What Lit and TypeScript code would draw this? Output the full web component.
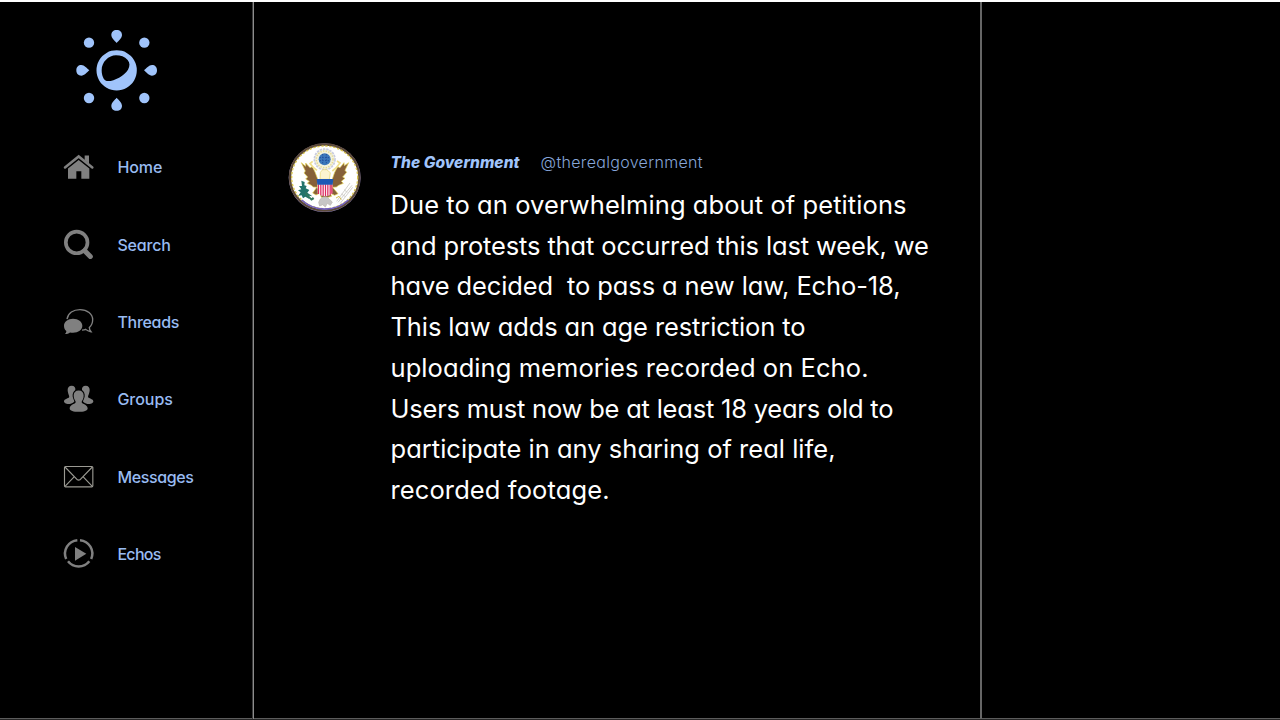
import { LitElement, html, svg, css } from "lit";
import { customElement, property } from "lit/decorators.js";

/** A single line of text whose tracking is adjusted to a given measure. */
@customElement("fit-line")
class FitLine extends LitElement {
  @property() text = "";
  @property({ type: Number }) measure = 100;

  static styles = css`
    :host { display: block; white-space: pre; }
    .run { display: inline-block; }
  `;

  firstUpdated() {
    const run = this.renderRoot.querySelector(".run") as HTMLElement;
    const natural = run.getBoundingClientRect().width;
    run.style.letterSpacing = `${(this.measure - natural) / (this.text.length - 1)}px`;
  }

  render() {
    return html`<span class="run">${this.text}</span>`;
  }
}

const G = "#808080";

const items = [
  {
    label: "Home", measure: 45, box: "30 27.6 108 108",
    art: svg`<path d="M45 83 L86 50 L127 83" fill="none" stroke=${G} stroke-width="7.5" stroke-linecap="round" stroke-linejoin="miter"/>
      <path d="M104 47 H117 V72 L104 61 Z" fill=${G}/>
      <path d="M54 86 L86 60.5 L118 86 V117 H94 V94 H79 V117 H54 Z" fill=${G}/>`,
  },
  {
    label: "Search", measure: 53.5, box: "30 259.7 108 108",
    art: svg`<circle cx="80" cy="306" r="32.5" fill="none" stroke=${G} stroke-width="11"/>
      <path d="M104 331 L121 348" stroke=${G} stroke-width="15" stroke-linecap="round"/>`,
  },
  {
    label: "Threads", measure: 62, box: "30 26.8 108 108",
    art: svg`<path d="M51 72 C54 54 70 43.500 90 43.500 C112 43.500 128 57 128 74 C128 84 124 92 118 97 C118 102 120 106 123 110 C116 109 111 107 107 103 C103 105 99 105 96 105" fill="none" stroke=${G} stroke-width="4"/>
      <path d="M69 71 C85 71 97 80 97 92 C97 104 85 113 69 113 C66 113 63 113 60 112 C56 115 51 117 45 117 C48 114 49 111 49 108 C44 104 42 98 42 92 C42 80 54 71 69 71 Z" fill=${G}/>`,
  },
  {
    label: "Groups", measure: 55.5, box: "30 258.8 108 108",
    art: svg`<g fill=${G}>
      <path d="M65 273 C73 273 77 278 76 286 C70 290 67 297 68 305 C69 312 73 317 73 320 C71 324 65 325 60 328 C50 328 42 325 42 320 C42 313 51 312 57 308 C60 305 53 297 53 286 C53 278 57 273 65 273 Z"/>
      <path d="M107 273 C99 273 95 278 96 286 C102 290 105 297 104 305 C103 312 99 317 99 320 C101 324 107 325 112 328 C122 328 130 325 130 320 C130 313 121 312 115 308 C112 305 119 297 119 286 C119 278 115 273 107 273 Z"/>
      <path d="M86 287 C96 287 101 293 101 302 C101 312 97 316 95 321 C93 328 113 328 113 341 C113 348 101 351 86 351 C71 351 59 348 59 341 C59 328 79 328 77 321 C75 316 71 312 71 302 C71 293 76 287 86 287 Z"/></g>`,
  },
  {
    label: "Messages", measure: 76.5, box: "30 26 108 108",
    art: svg`<g fill="none" stroke="#9a9992" stroke-width="3.4"><rect x="43.500" y="48.500" width="85" height="61" rx="3"/>
      <path d="M45 50 L78 84 C83 91 89 91 94 84 L127 50 M45 108 L73 79 M127 108 L99 79"/></g>`,
  },
  {
    label: "Echos", measure: 44, box: "30 258 108 108",
    art: svg`<g fill="none" stroke=${G} stroke-width="7.500">
      <path d="M82 270.500 A40.500 40.500 0 0 0 48.500 327"/>
      <path d="M90 270.500 A40.500 40.500 0 0 1 123.500 327"/>
      <path d="M54 334 A40.500 40.500 0 0 0 118 334"/></g>
      <path d="M75 291 L109 311 L75 332 Z" fill=${G}/>`,
  },
];

const lines: [string, number][] = [
  ["Due to an overwhelming about of petitions", 516],
  ["and protests that occurred this last week, we", 538.5],
  ["have decided  to pass a new law, Echo-18,", 510],
  ["This law adds an age restriction to", 415],
  ["uploading memories recorded on Echo.", 478],
  ["Users must now be at least 18 years old to", 503],
  ["participate in any sharing of real life,", 445],
  ["recorded footage.", 219],
];

const logo = svg`<g fill="#a0c4fb">
  <path fill-rule="evenodd" d="M152 90.500 A60.500 60.500 0 1 1 151.900 90.500 Z M150 106 C128 106 107 126 107 151 C107 166 113 182 122 183 C141 186 174 168 186 149 C192 139 192 128 185 120 C176 110 164 106 150 106 Z"/>
  <circle cx="69" cy="68" r="15.500"/><circle cx="235" cy="68" r="15.500"/>
  <circle cx="69" cy="234" r="15.500"/><circle cx="235" cy="234" r="15.500"/>
  <path d="M152 30 C162 30 168 36 168 45 C168 54 158 62 152 69 C146 62 136 54 136 45 C136 36 142 30 152 30 Z"/>
  <path d="M152 272 C162 272 168 266 168 257 C168 248 158 240 152 233 C146 240 136 248 136 257 C136 266 142 272 152 272 Z"/>
  <path d="M31 151 C31 141 37 135 46 135 C55 135 63 145 70 151 C63 157 55 167 46 167 C37 167 31 161 31 151 Z"/>
  <path d="M273 151 C273 141 267 135 258 135 C249 135 241 145 234 151 C241 157 249 167 258 167 C267 167 273 161 273 151 Z"/></g>`;

const seal = svg`
  <ellipse cx="134" cy="128" rx="108" ry="103" fill="#8f83b8"/>
  <ellipse cx="134" cy="127.500" rx="104" ry="99" fill="#fff" stroke="#5c4a3a" stroke-width="7"/>
  <ellipse cx="134" cy="127" rx="99" ry="94" fill="none" stroke="#d8c34c" stroke-width="4" stroke-dasharray="7 5"/>
  <path d="M65 195 A100 95 0 0 0 205 195" fill="none" stroke="#7260c0" stroke-width="5"/>
  <circle cx="134" cy="73" r="31" fill="#f4f2dc" stroke="#c9cce0" stroke-width="5" stroke-dasharray="7 3"/>
  <circle cx="134" cy="73" r="25" fill="none" stroke="#e5d98e" stroke-width="4" stroke-dasharray="4 4"/>
  <circle cx="134" cy="73" r="18" fill="#3d79bb"/>
  <path d="M119 68 H149 M119 77 H149 M128 57 V89 M139 57 V89" stroke="#234f9d" stroke-width="3" stroke-dasharray="4 4"/>
  <g fill="#86613a" stroke="#e8d855" stroke-width="2">
    <path d="M64 83 L77 94 L77 84 L90 98 L97 95 L105 111 L113 132 L113 157 L100 156 L94 151 L82 145 L88 139 L77 132 L83 126 L72 114 L76 108 Z"/>
    <path d="M206 83 L193 92 L192 83 L180 98 L173 95 L164 112 L157 132 L157 157 L169 156 L176 151 L190 145 L184 139 L195 130 L188 126 L200 112 L195 106 Z"/>
    <path d="M111 156 L98 174 L108 180 L120 174 M157 156 L174 176 L164 181 L149 174"/>
    <path d="M119 175 H150 L155 184 L144 187 H124 Z"/>
  </g>
  <path d="M121 112 L128 104 L140 104 L151 113 L148 133 H120 Z" fill="#fbf4d0" stroke="#e5d469" stroke-width="2"/>
  <path d="M98 79 L90 86 L100 97 L111 106 M171 78 L180 84 L168 99 L157 108" fill="none" stroke="#f0e08c" stroke-width="5"/>
  <path d="M113 147 H157 V175 L149 181 L135 184 L121 181 L113 175 Z" fill="#fff"/>
  <path d="M115.500 148 V177 M122.500 148 V181 M129.500 148 V183 M136.500 148 V184 M143.500 148 V182 M150.500 148 V180 M155.500 148 V176" stroke="#dc285e" stroke-width="3.800"/>
  <path d="M110 132 H160 L158 149 H112 Z" fill="#1e58b5"/>
  <path d="M121 192 L130 186 H141 L157 201 L151 211 L142 205 L136 216 L128 209 L119 213 L116 202 Z" fill="#c7c6c6" stroke="#b9b4ac" stroke-width="2"/>
  <g fill="#23736a">
    <path d="M64 137 L74 141 L73 151 L80 153 L77 160 L88 165 L82 173 L97 184 L86 182 L88 192 L76 185 L69 190 L65 181 L55 182 L62 172 L54 166 L64 163 L57 153 L66 153 Z"/>
    <path d="M77 171 L94 190 L99 186 L103 192 L94 197 L75 178 Z" fill="#33775d"/>
  </g>
  <g stroke="#d2d0cc" stroke-width="3" fill="none">
    <path d="M170 199 L210 144 M174 202 L216 151 M180 206 L218 157 M192 164 L202 172 M184 177 L195 184"/>
    <path d="M168 189 L177 184 L184 194" stroke="#d9c151"/>
  </g>`;

@customElement("app-root")
class AppRoot extends LitElement {
  static styles = css`
    :host {
      display: block;
      font-family: Inter, Lato, sans-serif;
      font-feature-settings: "cv11" 1;
    }
    .page {
      box-sizing: border-box;
      width: 1280px;
      height: 720px;
      overflow: hidden;
      display: grid;
      grid-template-columns: 254px 728px 1fr;
      background: #000;
      border-top: 2px solid #fff;
      border-bottom: 1px solid #242424;
      box-shadow: inset 0 -1px #5c5c5c;
    }
    .side { box-sizing: border-box; border-right: 1px solid #8c8c8c; box-shadow: inset -1px 0 #3c3c3c; padding: 18px 0 0 60px; }
    .logo { display: block; width: 100px; height: 100px; margin-left: 6px; }
    .nav { display: flex; flex-direction: column; padding-top: 8.500px; }
    .item { display: flex; align-items: center; gap: 21.400px; height: 77.360px; color: #98bbf2; font-size: 16px; font-weight: 500; }
    .icon { display: block; width: 36px; height: 36px; flex: none; }
    .main { box-sizing: border-box; border-right: 2px solid #666; padding: 133px 0 0 26px; }
    .post { display: flex; gap: 20.500px; }
    .avatar { display: block; width: 90px; height: 90px; flex: none; }
    .head { display: flex; align-items: center; gap: 21px; height: 20px; margin-top: 17px; font-size: 16px; line-height: 20px; }
    .name { color: #a0c4fb; font-weight: 800; font-style: italic; font-size: 15.500px; padding-top: 1px; }
    .handle { color: #86a5d8; font-weight: 300; }
    .body { margin-top: 13px; color: #fff; font-size: 25.500px; line-height: 40.700px; }
  `;

  render() {
    return html`
      <div class="page">
        <aside class="side">
          <svg class="logo" viewBox="0 0 300 300">${logo}</svg>
          <nav class="nav">
            ${items.map((i) => html`
              <div class="item">
                <svg class="icon" viewBox=${i.box}>${i.art}</svg>
                <fit-line .text=${i.label} .measure=${i.measure}></fit-line>
              </div>`)}
          </nav>
        </aside>
        <main class="main">
          <article class="post">
            <svg class="avatar" viewBox="0 0 270 270">${seal}</svg>
            <div>
              <div class="head">
                <fit-line class="name" .text=${"The Government"} .measure=${129}></fit-line>
                <fit-line class="handle" .text=${"@therealgovernment"} .measure=${162}></fit-line>
              </div>
              <div class="body">
                ${lines.map(([t, w]) => html`<fit-line .text=${t} .measure=${w}></fit-line>`)}
              </div>
            </div>
          </article>
        </main>
        <aside></aside>
      </div>`;
  }
}
